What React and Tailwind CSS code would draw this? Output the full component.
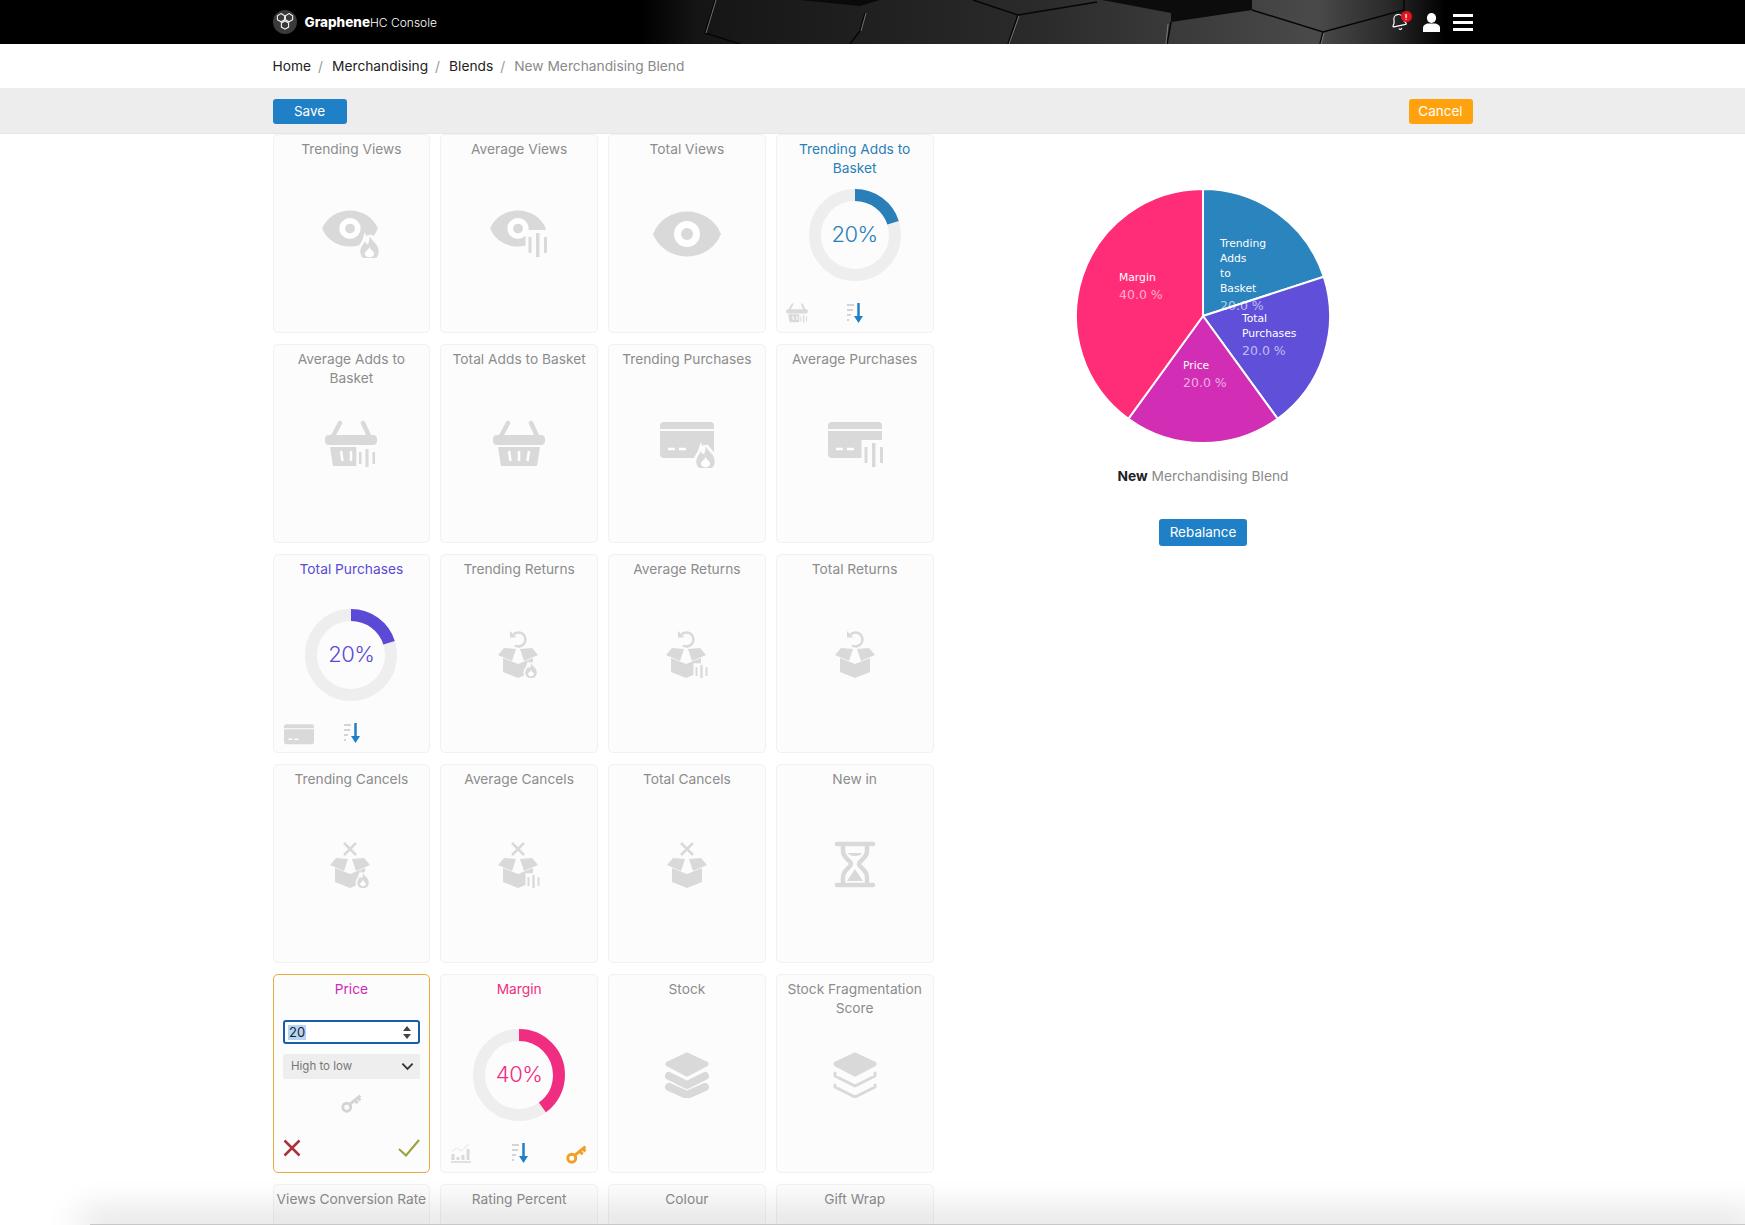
import React from 'react'
import { Bell } from 'lucide-react'

const GREY = '#d9d9d9'
const PAPER = '#fcfcfc'

function Flame({ at = 'translate(18.5 14) scale(1.15)' }) {
  return (
    <g transform={at}>
      <path
        d="M0 -11C1 -6 8 -4 8 3C8 8 4 11 0 11C-4 11 -8 8 -8 3C-8 -1 -5 -3 -4 -6C-3 -3 -2 -3 -1 -4C0 -6 0 -8 0 -11Z"
        fill={GREY}
        stroke={PAPER}
        strokeWidth="5"
        paintOrder="stroke"
      />
      <path d="M0 -1C1 2 4 3 4 5C4 7 2 8 0 8C-2 8 -4 7 -4 5C-4 3 -1 2 0 -1Z" fill="#ffffff" />
    </g>
  )
}

function Bars({ at }) {
  return (
    <g transform={at}>
      <rect x="6.5" y="-4" width="24" height="30" fill={PAPER} />
      <rect x="9.5" y="3" width="3" height="16" fill={GREY} />
      <rect x="17" y="-1" width="3.5" height="24" fill={GREY} />
      <rect x="25" y="3" width="3" height="16" fill={GREY} />
    </g>
  )
}

function Eye() {
  return (
    <g>
      <path d="M-34 0C-22 -30 22 -30 34 0C22 30 -22 30 -34 0Z" fill={GREY} />
      <circle r="13" fill="#ffffff" />
      <circle r="6" fill={GREY} />
    </g>
  )
}

function Basket() {
  return (
    <g>
      <path d="M-18 -8L-11 -21M18 -8L12 -21" stroke={GREY} strokeWidth="4.5" strokeLinecap="round" fill="none" />
      <rect x="-26" y="-9" width="52" height="10" rx="4" fill={GREY} />
      <path d="M-21 3H21L18 22H-18Z" fill={GREY} />
      <path d="M-10 7L-8.5 17M0 7V17M10 7L8.5 17" stroke="#ffffff" strokeWidth="2.5" fill="none" />
    </g>
  )
}

function CreditCard() {
  return (
    <g>
      <path d="M-27 -15V-18A4 4 0 0 1 -23 -22H23A4 4 0 0 1 27 -18V-15Z" fill={GREY} />
      <path d="M-27 -13H27V10A4 4 0 0 1 23 14H-23A4 4 0 0 1 -27 10Z" fill={GREY} />
      <path d="M-19 5H-12M-8 5H-1" stroke="#ffffff" strokeWidth="2.5" />
    </g>
  )
}

function OpenBox() {
  return (
    <g>
      <path d="M-15 4L0 10L15 4V18L0 24L-15 18Z" fill={GREY} />
      <path d="M-20 1L-14 -6L-2 -5L-6 7Z" fill={GREY} />
      <path d="M20 1L14 -6L2 -5L6 7Z" fill={GREY} />
    </g>
  )
}

function BoxReturn() {
  return (
    <g>
      <OpenBox />
      <path d="M-4.5 -19.5A7 7 0 1 1 -3 -8.5" stroke={GREY} strokeWidth="2.5" fill="none" />
      <path d="M-8 -23V-16.5H-1.5Z" fill={GREY} />
    </g>
  )
}

function BoxCancel() {
  return (
    <g>
      <OpenBox />
      <path d="M-6 -21L6 -9M6 -21L-6 -9" stroke={GREY} strokeWidth="2.5" fill="none" />
    </g>
  )
}

function Hourglass() {
  return (
    <g>
      <path d="M-18 -20H18M-18 21H18" stroke={GREY} strokeWidth="4.5" strokeLinecap="round" />
      <path
        d="M-12 -20V-13C-12 -6 -4 -3 -4 0C-4 3 -12 6 -12 13V21M12 -20V-13C12 -6 4 -3 4 0C4 3 12 6 12 13V21"
        stroke={GREY}
        strokeWidth="4.5"
        fill="none"
      />
      <path d="M-7 -11H7C6 -7 -6 -7 -7 -11Z" fill={GREY} />
      <path d="M0 5L8 17H-8Z" fill={GREY} />
    </g>
  )
}

function Layers({ outlined }) {
  const w = outlined ? 3 : 8
  return (
    <g strokeLinejoin="round" strokeLinecap="round" fill="none" stroke={GREY}>
      <path d="M-19 -10L0 -19L19 -10L0 0Z" fill={GREY} strokeWidth="5" />
      {outlined ? (
        <path d="M-20 -1V2L0 12L20 2V-1M-20 11V13L0 23L20 13V11" strokeWidth={w} />
      ) : (
        <path d="M-18 2L0 11L18 2M-18 13L0 21L18 13" strokeWidth={w} />
      )}
    </g>
  )
}

// a grey placeholder glyph, main shape plus an optional trending/average marker
function Glyph({ shape, mark, className = 'w-[72px] h-[48px]' }) {
  const shapes = {
    eye: <Eye />,
    basket: <Basket />,
    card: <CreditCard />,
    returns: <BoxReturn />,
    cancels: <BoxCancel />,
    hourglass: <Hourglass />,
    layers: <Layers />,
    layersOutline: <Layers outlined />,
  }
  const squeeze = {
    eye: 'translate(-1 -5.5) scale(0.82 0.8)',
    returns: 'translate(-1 0)',
    cancels: 'translate(-1 0)',
  }
  const flameAt = {
    returns: 'translate(12 16.5) scale(0.72)',
    cancels: 'translate(12 16.5) scale(0.72)',
  }
  const barsAt = {
    basket: 'translate(-0.3 5.75) scale(0.87 0.75)',
    returns: 'translate(2.3 11.5) scale(0.65 0.55)',
    cancels: 'translate(2.3 11.5) scale(0.65 0.55)',
  }
  return (
    <svg viewBox="-36 -24 72 48" className={className}>
      <g transform={mark ? squeeze[shape] : undefined}>{shapes[shape]}</g>
      {mark === 'flame' && <Flame at={flameAt[shape]} />}
      {mark === 'bars' && <Bars at={barsAt[shape]} />}
    </svg>
  )
}

function SortIcon() {
  return (
    <svg viewBox="0 0 17 20" className="w-[17px] h-[20px]">
      <path d="M1 2H8M1 7H7M1 12H5M1 17H3" stroke="#d4d4d4" strokeWidth="2" />
      <path d="M12.5 0V15" stroke="#1f7fc7" strokeWidth="2.5" />
      <path d="M8 13H17L12.5 20Z" fill="#1f7fc7" />
    </svg>
  )
}

function KeyIcon({ color }) {
  return (
    <svg viewBox="0 0 20 20" className="w-[21px] h-[21px]">
      <circle cx="5.5" cy="14.5" r="3.8" stroke={color} strokeWidth="2.8" fill="none" />
      <path d="M8.5 11.5L18.5 3.5M13 8L16 10.5M16 5.5L18.5 8" stroke={color} strokeWidth="2.8" fill="none" />
    </svg>
  )
}

function ChartIcon() {
  return (
    <svg viewBox="0 0 20 20" className="w-[20px] h-[20px]">
      <path d="M0 19H20" stroke={GREY} strokeWidth="1.5" />
      <path d="M2 17V11M7 17V14M12 17V12M17 17V6" stroke={GREY} strokeWidth="3" />
      <path d="M1 8L6 5L10 8L18 1" stroke={GREY} strokeWidth="1" strokeDasharray="2 1" fill="none" />
    </svg>
  )
}

function Donut({ value, color }) {
  const circumference = 2 * Math.PI * 40
  return (
    <div className="relative w-[92px] h-[92px] flex items-center justify-center">
      <svg viewBox="0 0 92 92" className="absolute inset-0 w-full h-full -rotate-90">
        <circle cx="46" cy="46" r="40" fill="none" stroke="#eeeeee" strokeWidth="12" />
        <circle
          cx="46"
          cy="46"
          r="40"
          fill="none"
          stroke={color}
          strokeWidth="12"
          strokeDasharray={`${(circumference * value) / 100} ${circumference}`}
        />
      </svg>
      <span className="text-[22px] font-light tracking-[-0.5px]" style={{ color }}>
        {value}%
      </span>
    </div>
  )
}

function Card({ title, shape, mark, donut, color, footer }) {
  return (
    <div className="grid grid-cols-1 grid-rows-1 h-[199px] bg-[#fcfcfc] border border-[#f1f1f1] rounded-[5px]">
      <div
        className="col-start-1 row-start-1 self-start px-[2px] pt-[5px] text-center text-[13.75px] leading-[19px] text-[#8c8c8c]"
        style={color ? { color } : undefined}
      >
        {title}
      </div>
      <div className="col-start-1 row-start-1 place-self-center">
        {donut ? <div className="mt-[2px]"><Donut value={donut} color={color} /></div> : shape && <Glyph shape={shape} mark={mark} />}
      </div>
      {footer && (
        <div className="col-start-1 row-start-1 self-end grid grid-cols-3 items-center px-[10px] pb-[9px]">
          <div className="justify-self-start h-[20px] flex items-center">{footer[0]}</div>
          <div className="justify-self-center h-[20px] flex items-center"><SortIcon /></div>
          <div className="justify-self-end h-[20px] flex items-center">{footer[1]}</div>
        </div>
      )}
    </div>
  )
}

function PriceCard() {
  return (
    <div className="h-[199px] bg-[#fcfcfc] border-[1.5px] border-[#e9ab3f] rounded-[5px] flex flex-col px-[9.5px]">
      <div className="pt-[5px] text-center text-[13.75px] leading-[19px] text-[#cf2ab5]">Price</div>
      <div className="mt-[21px] h-[24px] flex items-center justify-between bg-white border-2 border-[#165db0] rounded-[3px] pl-[3px] pr-[7px]">
        <span className="text-[13px] leading-[15px] px-[1px] bg-[#b5d5f7] text-[#222]">20</span>
        <svg viewBox="0 0 8 13" className="w-[8px] h-[13px]">
          <path d="M4 0L8 5H0ZM4 13L0 8H8Z" fill="#444444" />
        </svg>
      </div>
      <div className="mt-[10px] h-[25px] flex items-center justify-between bg-[#eeeeee] rounded-[2px] pl-[8px] pr-[6px] text-[11.5px] text-[#777]">
        High to low
        <svg viewBox="0 0 14 9" className="w-[13px] h-[9px]">
          <path d="M1.5 1.5L7 7L12.5 1.5" stroke="#333333" strokeWidth="2" fill="none" />
        </svg>
      </div>
      <div className="mt-[13px] self-center">
        <KeyIcon color="#d4d4d4" />
      </div>
      <div className="mt-[26px] flex items-center justify-between">
        <svg viewBox="0 0 18 18" className="w-[18px] h-[18px]">
          <path d="M1.5 1.5L16.5 16.5M16.5 1.5L1.5 16.5" stroke="#a8323f" strokeWidth="2.5" fill="none" />
        </svg>
        <svg viewBox="0 0 22 18" className="w-[22px] h-[18px]">
          <path d="M1 10L8 16.5L21 1" stroke="#9ba13c" strokeWidth="2" fill="none" />
        </svg>
      </div>
    </div>
  )
}

const cards = [
  { title: 'Trending Views', shape: 'eye', mark: 'flame' },
  { title: 'Average Views', shape: 'eye', mark: 'bars' },
  { title: 'Total Views', shape: 'eye' },
  {
    title: 'Trending Adds to Basket',
    donut: 20,
    color: '#2a7fb8',
    footer: [<Glyph shape="basket" mark="bars" className="w-[30px] h-[20px] -ml-[5px]" />, null],
  },
  { title: 'Average Adds to Basket', shape: 'basket', mark: 'bars' },
  { title: 'Total Adds to Basket', shape: 'basket' },
  { title: 'Trending Purchases', shape: 'card', mark: 'flame' },
  { title: 'Average Purchases', shape: 'card', mark: 'bars' },
  {
    title: 'Total Purchases',
    donut: 20,
    color: '#5a4ad6',
    footer: [<Glyph shape="card" className="w-[40px] h-[27px] -ml-[5px] mt-[7px]" />, null],
  },
  { title: 'Trending Returns', shape: 'returns', mark: 'flame' },
  { title: 'Average Returns', shape: 'returns', mark: 'bars' },
  { title: 'Total Returns', shape: 'returns' },
  { title: 'Trending Cancels', shape: 'cancels', mark: 'flame' },
  { title: 'Average Cancels', shape: 'cancels', mark: 'bars' },
  { title: 'Total Cancels', shape: 'cancels' },
  { title: 'New in', shape: 'hourglass' },
  { price: true },
  {
    title: 'Margin',
    donut: 40,
    color: '#f02d80',
    footer: [<ChartIcon />, <KeyIcon color="#f0a024" />],
  },
  { title: 'Stock', shape: 'layers' },
  { title: 'Stock Fragmentation Score', shape: 'layersOutline' },
  { title: 'Views Conversion Rate' },
  { title: 'Rating Percent' },
  { title: 'Colour' },
  { title: 'Gift Wrap' },
]

function polar(angle, r = 127) {
  const rad = (angle * Math.PI) / 180
  return `${130 + r * Math.cos(rad)} ${130 + r * Math.sin(rad)}`
}

function slicePath(from, to) {
  const large = to - from > 180 ? 1 : 0
  return `M130 130L${polar(from)}A127 127 0 ${large} 1 ${polar(to)}Z`
}

const slices = [
  { from: -90, to: -18, color: '#2a84bd', x: 147, lines: [[61, 'Trending'], [76, 'Adds'], [91, 'to'], [106, 'Basket']], pctY: 124 },
  { from: -18, to: 54, color: '#5f4fd9', x: 169, lines: [[136, 'Total'], [151, 'Purchases']], pctY: 169 },
  { from: 54, to: 126, color: '#d22db5', x: 110, lines: [[183, 'Price']], pctY: 201 },
  { from: 126, to: 270, color: '#ff2d78', x: 46, lines: [[95, 'Margin']], pctY: 113 },
]

function Pie() {
  return (
    <svg viewBox="0 0 260 260" className="w-[260px] h-[260px]" style={{ fontFamily: '"DejaVu Sans", sans-serif' }}>
      {slices.map((s) => (
        <path key={s.color} d={slicePath(s.from, s.to)} fill={s.color} stroke="#ffffff" strokeWidth="2" />
      ))}
      {slices.map((s) => (
        <g key={s.color}>
          {s.lines.map(([y, text]) => (
            <text key={text} x={s.x} y={y} fontSize="10.75" fill="#ffffff">{text}</text>
          ))}
          <text x={s.x} y={s.pctY} fontSize="12.5" fill="#ffffff" fillOpacity="0.62">
            {(((s.to - s.from) / 360) * 100).toFixed(1)} %
          </text>
        </g>
      ))}
    </svg>
  )
}

function HeaderArt() {
  return (
    <svg viewBox="0 0 1745 44" preserveAspectRatio="none" className="absolute inset-0 w-full h-full">
      <defs>
        <linearGradient id="hexFade" x1="0" y1="0" x2="1" y2="0">
          <stop offset="0" stopColor="#000000" />
          <stop offset="0.07" stopColor="#151515" />
          <stop offset="0.5" stopColor="#2b2b2b" />
          <stop offset="0.84" stopColor="#4a4a4a" />
          <stop offset="0.93" stopColor="#2a2a2a" />
          <stop offset="1" stopColor="#000000" />
        </linearGradient>
      </defs>
      <rect x="640" width="805" height="44" fill="url(#hexFade)" />
      <path d="M1102 0L1171 13V22L1252 10V0Z" fill="#0c0c0c" />
      <path d="M800 0H880L860 6Z" fill="#0a0a0a" />
      <g stroke="#060606" strokeWidth="1.5" fill="none">
        <path d="M715 0L705 33L740 44M865 13L860 31L850 44M973 0L1018 15L1097 2M1018 15L1008 44M1171 22L1167 44" />
        <path d="M1252 10L1323 32L1404 10V0M1323 32L1320 44" />
      </g>
      <g stroke="#8a8a8a" strokeWidth="0.8" fill="none">
        <path d="M716 0L706 33M866 13L861 31M1019 16L1009 44M1168 24L1166 44M1324 33L1321 44" />
      </g>
    </svg>
  )
}

export default function App() {
  return (
    <div className="relative h-[1225px] overflow-hidden bg-white font-['Inter',sans-serif]">
      <header className="relative h-11 bg-black">
        <HeaderArt />
        <div className="relative w-[1200px] h-full mx-auto flex items-center justify-between">
          <div className="flex items-center gap-[8px] text-white">
            <svg viewBox="0 0 24 24" className="w-[24px] h-[24px]">
              <circle cx="12" cy="12" r="12" fill="#3a3a3a" />
              <path
                d="M8 3.6L11.6 5.7V9.7L8 11.8L4.4 9.7V5.7ZM16 3.6L19.6 5.7V9.7L16 11.8L12.4 9.7V5.7ZM12 11L15.6 13.1V17.1L12 19.2L8.4 17.1V13.1Z"
                fill="none"
                stroke="#f2f2f2"
                strokeWidth="1.1"
              />
            </svg>
            <span className="flex items-baseline">
              <span className="text-[13.5px] font-extrabold">Graphene</span>
              <span className="text-[12px] font-light">HC Console</span>
            </span>
          </div>
          <div className="flex items-center">
            <div className="relative">
              <Bell size={18} strokeWidth={1.6} color="#ffffff" className="-rotate-12" />
              <span className="absolute -top-[2px] -right-[4px] w-[11px] h-[11px] rounded-full bg-[#e8121d] flex items-center justify-center text-[8px] leading-none font-bold text-white">!</span>
            </div>
            <svg viewBox="0 0 17 19" className="w-[17px] h-[19px] ml-[15px]">
              <ellipse cx="8.5" cy="5" rx="4.6" ry="5" fill="#ffffff" />
              <path d="M0 19V15C0 12 3 10.5 5.5 10.5H11.5C14 10.5 17 12 17 15V19Z" fill="#ffffff" />
            </svg>
            <div className="ml-[13px] w-[20px] flex flex-col gap-[4px]">
              <div className="h-[3px] bg-white" />
              <div className="h-[3px] bg-white" />
              <div className="h-[3px] bg-white" />
            </div>
          </div>
        </div>
      </header>

      <nav className="w-[1200px] h-11 mx-auto flex items-center text-[13.75px] text-[#222]">
        <span>Home</span>
        <span className="mx-[7px] text-[#999]">/</span>
        <span className="ml-[2px]">Merchandising</span>
        <span className="mx-[7px] text-[#999]">/</span>
        <span className="ml-[2px]">Blends</span>
        <span className="mx-[7px] text-[#999]">/</span>
        <span className="ml-[2px] text-[#8a8a8a]">New Merchandising Blend</span>
      </nav>

      <div className="h-[46px] bg-[#ededed] border-b border-[#e6e6e6]">
        <div className="w-[1200px] h-full mx-auto flex items-center justify-between pt-[1px]">
          <button className="w-[74px] h-[25px] rounded-[3px] bg-[#1f7fc7] text-[13.5px] text-white">Save</button>
          <button className="w-[64px] h-[25px] rounded-[3px] bg-[#ffa20d] text-[13.5px] text-white">Cancel</button>
        </div>
      </div>

      <main className="w-[1200px] mx-auto flex">
        <div className="w-[661px] shrink-0 grid grid-cols-4 gap-x-[10px] gap-y-[11px]">
          {cards.map((card, i) =>
            card.price ? <PriceCard key={i} /> : <Card key={i} {...card} />
          )}
        </div>
        <aside className="flex-1 flex flex-col items-center pt-[52px]">
          <Pie />
          <div className="mt-5 text-[13.75px] leading-5 text-[#8a8a8a]">
            <span className="font-bold text-[#222]">New</span> Merchandising Blend
          </div>
          <button className="mt-[33px] w-[88px] h-[27px] rounded-[3px] bg-[#1f7fc7] text-[13.5px] text-white">Rebalance</button>
        </aside>
      </main>

      <div className="absolute left-[90px] right-0 -bottom-[1px] h-[2px] bg-[#c8c8c8] shadow-[0_0_36px_10px_rgba(0,0,0,0.16)]" />
    </div>
  )
}
